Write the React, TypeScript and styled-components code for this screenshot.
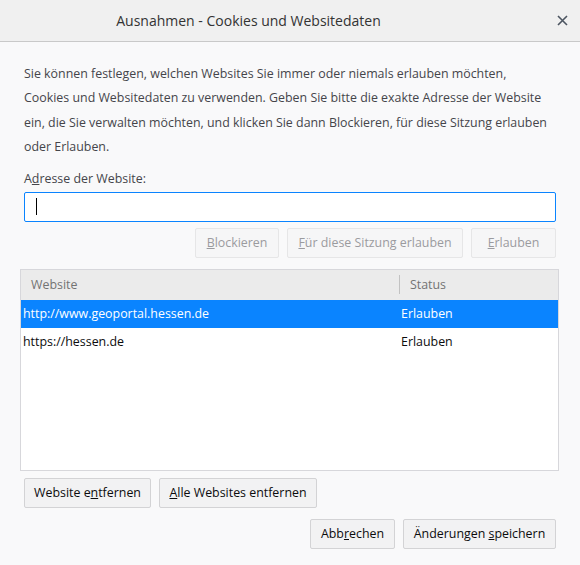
import React from "react";
import styled, { createGlobalStyle } from "styled-components";

const Global = createGlobalStyle`
  html, body { margin: 0; padding: 0; background: #f9f9fa; }
  body { font-family: "Open Sans", "Noto Sans", sans-serif; }
`;

const Dialog = styled.div`
  width: 580px;
  height: 565px;
  background: #f9f9fa;
  display: flex;
  flex-direction: column;
  overflow: hidden;
`;

const TitleBar = styled.div`
  height: 41px;
  background: #f0f0f0;
  border-bottom: 1px solid #c9c9c9;
  display: flex;
  align-items: center;
  flex-shrink: 0;
`;

const Title = styled.div`
  width: 497px;
  text-align: center;
  font-size: 14px;
  color: #333;
`;

const Close = styled.div`
  margin-left: auto;
  width: 34px;
  display: flex;
  justify-content: center;
  align-items: center;
  padding-right: 1px;
`;

const Content = styled.div`
  padding: 20px 24px 0 24px;
  display: flex;
  flex-direction: column;
  font-size: 12.4px;
  color: #45454a;
`;

const Para = styled.p`
  margin: 0;
  line-height: 24.4px;
  white-space: nowrap;
`;

const Label = styled.label`
  margin-top: 9px;
  line-height: 20px;
  display: block;
`;

const Input = styled.div`
  margin-top: 3px;
  height: 30px;
  box-sizing: border-box;
  border: 1px solid #0a84ff;
  border-radius: 2px;
  background: #fff;
  display: flex;
  align-items: center;
  padding-left: 11px;
`;

const Caret = styled.span`
  width: 1px;
  height: 17px;
  background: #000;
`;

const Row = styled.div<{ $top: number; $justify?: string }>`
  margin-top: ${(p) => p.$top}px;
  display: flex;
  gap: 8px;
  justify-content: ${(p) => p.$justify || "flex-start"};
`;

const Button = styled.button<{ $w: number; $disabled?: boolean }>`
  width: ${(p) => p.$w}px;
  height: 30px;
  box-sizing: border-box;
  padding: 0;
  border-radius: 2px;
  font-family: inherit;
  font-size: 12.4px;
  border: 1px solid ${(p) => (p.$disabled ? "#e6e6e7" : "#d3d3d5")};
  background: ${(p) => (p.$disabled ? "#f6f6f7" : "#f2f2f3")};
  color: ${(p) => (p.$disabled ? "#9b9b9f" : "#0c0c0d")};
`;

const Table = styled.div`
  margin: 11px -3px 0 -4px;
  height: 202px;
  box-sizing: border-box;
  border: 1px solid #d7d7db;
  background: #fff;
  display: flex;
  flex-direction: column;
`;

const Header = styled.div`
  height: 30px;
  background: #ebebeb;
  display: grid;
  grid-template-columns: 378px 1fr;
  align-items: center;
  color: #737373;
  flex-shrink: 0;
`;

const HeadCell = styled.div<{ $sep?: boolean }>`
  padding-left: 10px;
  height: ${(p) => (p.$sep ? "19px" : "auto")};
  line-height: 19px;
  border-left: ${(p) => (p.$sep ? "1px solid #c2c2c2" : "none")};
`;

const DataRow = styled.div<{ $selected?: boolean }>`
  height: 28px;
  display: grid;
  grid-template-columns: 378px 1fr;
  align-items: center;
  background: ${(p) => (p.$selected ? "#0a84ff" : "transparent")};
  color: ${(p) => (p.$selected ? "#fff" : "#0c0c0d")};
`;

const Cell = styled.div<{ $pad: number }>`
  padding-left: ${(p) => p.$pad}px;
`;

const App: React.FC = () => (
  <>
    <Global />
    <Dialog>
      <TitleBar>
        <Title>Ausnahmen - Cookies und Websitedaten</Title>
        <Close>
          <svg width="11" height="11" viewBox="0 0 11 11">
            <path d="M1 1 L10 10 M10 1 L1 10" stroke="#4c5561" strokeWidth="1.6" />
          </svg>
        </Close>
      </TitleBar>
      <Content>
        <Para>
          Sie können festlegen, welchen Websites Sie immer oder niemals erlauben möchten,
          <br />
          Cookies und Websitedaten zu verwenden. Geben Sie bitte die exakte Adresse der Website
          <br />
          ein, die Sie verwalten möchten, und klicken Sie dann Blockieren, für diese Sitzung erlauben
          <br />
          oder Erlauben.
        </Para>
        <Label>
          A<u>d</u>resse der Website:
        </Label>
        <Input>
          <Caret />
        </Input>
        <Row $top={6} $justify="flex-end">
          <Button $w={84} $disabled>
            <u>B</u>lockieren
          </Button>
          <Button $w={176} $disabled>
            <u>F</u>ür diese Sitzung erlauben
          </Button>
          <Button $w={85} $disabled>
            <u>E</u>rlauben
          </Button>
        </Row>
        <Table>
          <Header>
            <HeadCell>Website</HeadCell>
            <HeadCell $sep>Status</HeadCell>
          </Header>
          <DataRow $selected>
            <Cell $pad={2}>http://www.geoportal.hessen.de</Cell>
            <Cell $pad={2}>Erlauben</Cell>
          </DataRow>
          <DataRow>
            <Cell $pad={2}>https://hessen.de</Cell>
            <Cell $pad={2}>Erlauben</Cell>
          </DataRow>
        </Table>
        <Row $top={7}>
          <Button $w={127}>
            Website e<u>n</u>tfernen
          </Button>
          <Button $w={158}>
            <u>A</u>lle Websites entfernen
          </Button>
        </Row>
        <Row $top={11} $justify="flex-end">
          <Button $w={85}>
            Abb<u>r</u>echen
          </Button>
          <Button $w={153}>
            Änderungen <u>s</u>peichern
          </Button>
        </Row>
      </Content>
    </Dialog>
  </>
);

export default App;
